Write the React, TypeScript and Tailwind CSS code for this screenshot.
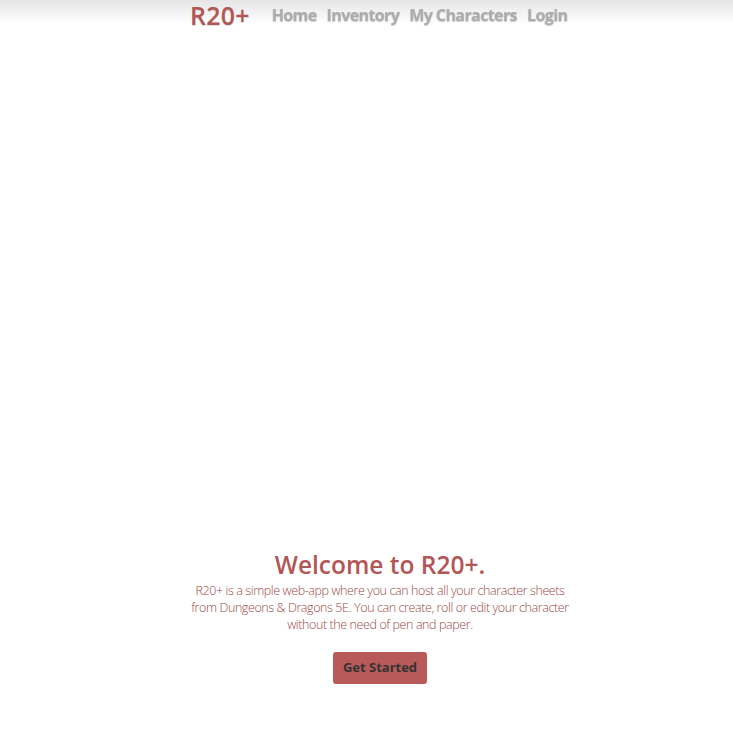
export default function App() {
  return (
    <div
      className="min-h-[735px] bg-white bg-gradient-to-b from-[#e5e5e5] via-white to-white bg-no-repeat [background-size:100%_48px]"
      style={{ fontFamily: '"Open Sans", "Noto Sans", sans-serif' }}
    >
      <nav className="ml-[190px] flex h-[30px] items-center whitespace-nowrap">
        <a className="text-[25px] font-semibold leading-[30px] tracking-[0.2px] text-[#b35656] [text-shadow:0_1px_1px_rgba(0,0,0,0.15)]">R20+</a>
        <div className="ml-[22px] flex gap-[10px] text-[16px] font-bold leading-[30px] tracking-[-0.6px] text-[#acacac] [text-shadow:0_1px_1px_rgba(0,0,0,0.2)]">
          <a>Home</a>
          <a>Inventory</a>
          <a>My Characters</a>
          <a>Login</a>
        </div>
      </nav>

      <main className="ml-[190px] flex w-[380px] flex-col items-center pt-[518px] text-center">
        <h1 className="text-[24.5px] font-semibold leading-[34px] text-[#b35656]">Welcome to R20+.</h1>
        <p className="-mx-[6px] w-[392px] text-[12.5px] font-light leading-[17px] tracking-[-0.4px] text-[#9a4848]">
          R20+ is a simple web-app where you can host all your character sheets from Dungeons &amp; Dragons 5E. You can create, roll or edit your character without the need of pen and paper.
        </p>
        <button className="mt-[19px] h-[32px] w-[94px] rounded-[3px] bg-[#b85a5a] text-[13px] font-bold text-[#333333]">
          Get Started
        </button>
      </main>
    </div>
  )
}
